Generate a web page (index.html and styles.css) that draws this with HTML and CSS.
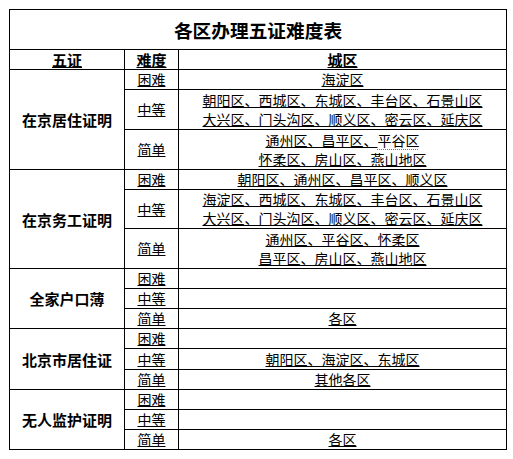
FILE: index.html
```html
<!DOCTYPE html>
<html lang="zh-CN">
<head>
<meta charset="utf-8">
<title>各区办理五证难度表</title>
<link rel="stylesheet" href="styles.css">
</head>
<body>
<div class="sheet">
  <div class="cell title">各区办理五证难度表</div>

  <div class="cell head"><span class="u">五证</span></div>
  <div class="cell head"><span class="u">难度</span></div>
  <div class="cell head"><span class="u">城区</span></div>

  <div class="cell label span3">在京居住证明</div>
  <div class="cell lvl"><span class="u">困难</span></div>
  <div class="cell area"><span class="u">海淀区</span></div>
  <div class="cell lvl"><span class="u">中等</span></div>
  <div class="cell area"><span class="u">朝阳区、西城区、东城区、丰台区、石景山区</span><span class="u">大兴区、门头沟区、顺义区、密云区、延庆区</span></div>
  <div class="cell lvl"><span class="u">简单</span></div>
  <div class="cell area"><span class="line"><span class="u">通州区、昌平区、</span><span class="spell">平谷区</span></span><span class="u">怀柔区、房山区、燕山地区</span></div>

  <div class="cell label span3">在京务工证明</div>
  <div class="cell lvl"><span class="u">困难</span></div>
  <div class="cell area"><span class="u">朝阳区、通州区、昌平区、顺义区</span></div>
  <div class="cell lvl"><span class="u">中等</span></div>
  <div class="cell area"><span class="u">海淀区、西城区、东城区、丰台区、石景山区</span><span class="u">大兴区、门头沟区、顺义区、密云区、延庆区</span></div>
  <div class="cell lvl"><span class="u">简单</span></div>
  <div class="cell area"><span class="u">通州区、平谷区、怀柔区</span><span class="u">昌平区、房山区、燕山地区</span></div>

  <div class="cell label span3">全家户口薄</div>
  <div class="cell lvl"><span class="u">困难</span></div>
  <div class="cell area"></div>
  <div class="cell lvl"><span class="u">中等</span></div>
  <div class="cell area"></div>
  <div class="cell lvl"><span class="u">简单</span></div>
  <div class="cell area"><span class="u">各区</span></div>

  <div class="cell label span3">北京市居住证</div>
  <div class="cell lvl"><span class="u">困难</span></div>
  <div class="cell area"></div>
  <div class="cell lvl"><span class="u">中等</span></div>
  <div class="cell area"><span class="u">朝阳区、海淀区、东城区</span></div>
  <div class="cell lvl"><span class="u">简单</span></div>
  <div class="cell area"><span class="u">其他各区</span></div>

  <div class="cell label span3">无人监护证明</div>
  <div class="cell lvl"><span class="u">困难</span></div>
  <div class="cell area"></div>
  <div class="cell lvl"><span class="u">中等</span></div>
  <div class="cell area"></div>
  <div class="cell lvl"><span class="u">简单</span></div>
  <div class="cell area"><span class="u">各区</span></div>
</div>
</body>
</html>
```
FILE: styles.css
```css
html, body {
  margin: 0;
  background: #fff;
}
body {
  padding: 9px;
  font-family: "Noto Sans CJK SC", "Noto Sans", sans-serif;
  color: #000;
}
.sheet {
  display: grid;
  width: 498px;
  box-sizing: border-box;
  background: #000;
  padding: 1px;
  gap: 1px;
  grid-template-columns: 114px 53px 327px;
  grid-template-rows: 39px 19px 19px 39px 39px 19px 38px 39px 19px 19px 19px 19px 20px 19px 19px 19px 19px;
}
.cell {
  background: #fff;
  display: flex;
  flex-direction: column;
  align-items: center;
  justify-content: center;
  font-size: 14px;
  line-height: 19px;
  white-space: nowrap;
}
.title {
  grid-column: 1 / -1;
  font-size: 18.7px;
  font-weight: 700;
  line-height: 24px;
}
.head {
  font-size: 15px;
  font-weight: 700;
}
.label {
  font-size: 15px;
  font-weight: 700;
}
.span3 {
  grid-row: span 3;
}
.u {
  text-decoration: underline;
  text-decoration-thickness: 1px;
  text-underline-offset: 1px;
}
.spell {
  text-decoration: underline dotted #3c9a3c;
  text-decoration-thickness: 1px;
  text-underline-offset: 3px;
}
```
